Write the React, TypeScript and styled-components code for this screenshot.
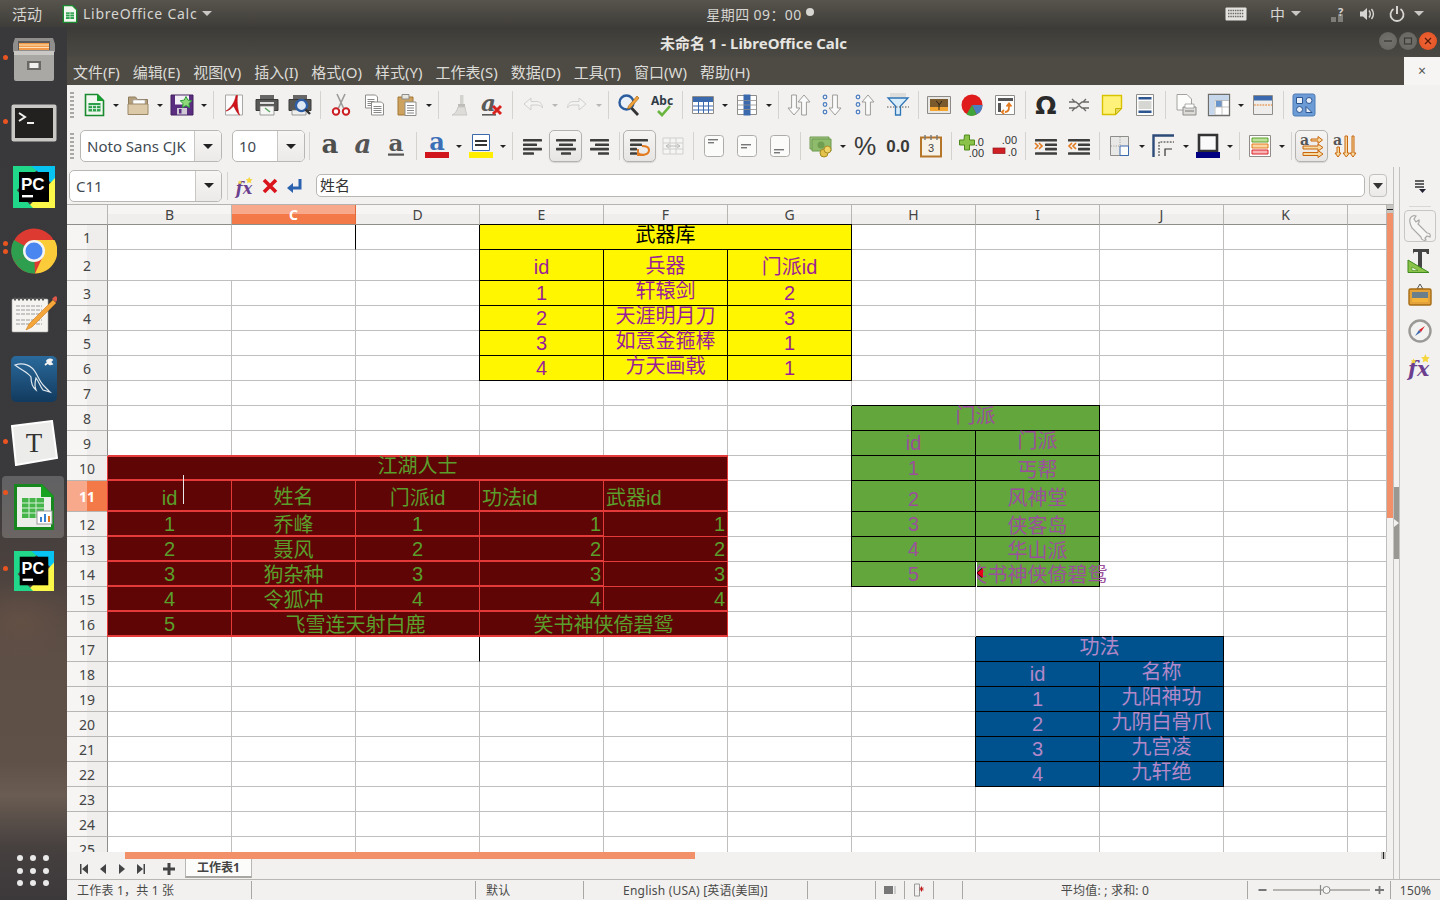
import React, { ReactNode } from 'react';
import styled, { createGlobalStyle } from 'styled-components';

const UI = `"Noto Sans", "Noto Sans CJK SC", sans-serif`;
const SHEET = `"Liberation Sans", "Noto Sans CJK SC", sans-serif`;

const Global = createGlobalStyle`
	html, body { margin: 0; padding: 0; height: 100%; overflow: hidden; background: #3a3a3c; }
	* { box-sizing: border-box; }
`;

const Page = styled.div`
	width: 1440px;
	height: 900px;
	display: flex;
	flex-direction: column;
	font-family: ${UI};
	overflow: hidden;
`;

/* ---------- gnome top bar ---------- */
const TopBar = styled.div`
	height: 27px;
	flex: none;
	display: grid;
	grid-template-columns: 1fr auto 1fr;
	align-items: center;
	padding: 0 12px;
	color: #d6d5d1;
	font-size: 14px;
	background: linear-gradient(#57544d, #3f3d39);
`;
const TopLeft = styled.div`
	display: flex;
	align-items: center;
`;
const AppName = styled.span`
	margin-left: 5px;
	letter-spacing: 0.75px;
`;
const Activities = styled.span`
	margin-right: 20px;
	font-size: 15px;
`;
const Clock = styled.div`
	display: flex;
	align-items: center;
	gap: 4px;
	margin-left: 80px;
	letter-spacing: 0.4px;
`;
const ClockDot = styled.i`
	width: 8px;
	height: 8px;
	border-radius: 50%;
	background: #d6d5d1;
	margin-top: -3px;
`;
const TopRight = styled.div`
	display: flex;
	align-items: center;
	justify-content: flex-end;
	padding-right: 4px;
`;
const TrayItem = styled.div<{ $m: number }>`
	margin-left: ${(p) => p.$m}px;
	display: flex;
	align-items: center;
	font-size: 15px;
`;
const Caret = styled.i<{ $m?: number }>`
	width: 0;
	height: 0;
	border-left: 5px solid transparent;
	border-right: 5px solid transparent;
	border-top: 5px solid #c9c8c4;
	margin-left: ${(p) => p.$m ?? 0}px;
`;

/* ---------- desktop ---------- */
const Desktop = styled.div`
	flex: 1;
	display: flex;
	min-height: 0;
`;
const Dock = styled.div`
	width: 67px;
	flex: none;
	display: flex;
	flex-direction: column;
	background:
		radial-gradient(60px 40px at 30% 68%, rgba(110, 85, 70, 0.55), transparent),
		linear-gradient(#39393b 0%, #3a3a3c 52%, #4c423e 62%, #5d4e46 72%, #5f5048 84%, #6a5c52 88%, #46403f 94%, #3c393b 100%);
`;
const DockItem = styled.div<{ $active?: boolean }>`
	position: relative;
	height: 64px;
	display: flex;
	align-items: center;
	justify-content: center;
	&::before {
		content: '';
		position: absolute;
		left: 2px;
		right: 3px;
		top: 1px;
		bottom: 1px;
		border-radius: 4px;
		background: ${(p) => (p.$active ? 'rgba(255,255,255,0.2)' : 'transparent')};
	}
	svg {
		position: relative;
	}
`;
const RunDot = styled.i<{ $top: number }>`
	position: absolute;
	left: 3px;
	top: ${(p) => p.$top}px;
	width: 5px;
	height: 5px;
	border-radius: 50%;
	background: #e95420;
`;
const AppsGrid = styled.div`
	margin-top: auto;
	padding: 0 0 14px 17px;
	display: grid;
	grid-template-columns: repeat(3, 6px);
	gap: 6.5px 7px;
	i {
		width: 6px;
		height: 6px;
		border-radius: 50%;
		background: #e9e9e9;
	}
`;

/* ---------- window ---------- */
const Window = styled.div`
	flex: 1;
	min-width: 0;
	display: flex;
	flex-direction: column;
	background: #f2f1f0;
`;
const TitleBar = styled.div`
	height: 30px;
	flex: none;
	position: relative;
	display: flex;
	align-items: center;
	justify-content: center;
	color: #e6e5e1;
	font-size: 15px;
	font-weight: 700;
	background: linear-gradient(#3d3b37, #4b4943);
`;
const WinButtons = styled.div`
	position: absolute;
	right: 3px;
	top: 5px;
	display: flex;
	gap: 2px;
`;
const WinButton = styled.div<{ $close?: boolean }>`
	width: 18px;
	height: 18px;
	border-radius: 50%;
	display: flex;
	align-items: center;
	justify-content: center;
	background: ${(p) => (p.$close ? 'radial-gradient(#f0663a, #e2501f)' : 'radial-gradient(#74736e, #64635e)')};
`;
const MenuBar = styled.div`
	height: 28px;
	flex: none;
	display: flex;
	align-items: center;
	padding-left: 6px;
	gap: 13px;
	color: #dcdbd7;
	font-size: 15px;
	background: #4e4b44;
`;
const MenuClose = styled.div`
	margin-left: auto;
	margin-top: -2px;
	width: 36px;
	height: 30px;
	background: #f6f5f4;
	color: #555;
	font-size: 14px;
	display: flex;
	align-items: center;
	justify-content: center;
`;
const Toolbar = styled.div<{ $h: number }>`
	height: ${(p) => p.$h}px;
	flex: none;
	display: flex;
	align-items: center;
	padding-left: 3px;
	background: #f2f1f0;
`;
const Grip = styled.i`
	width: 4px;
	height: 26px;
	margin-right: 3px;
	flex: none;
	background: repeating-linear-gradient(#aaa8a4 0 2px, transparent 2px 4px);
`;
const ToolBtn = styled.div<{ $pressed?: boolean }>`
	width: 33px;
	height: 32px;
	flex: none;
	display: flex;
	align-items: center;
	justify-content: center;
	${(p) =>
		p.$pressed &&
		`border: 1px solid #b4b2ae; border-radius: 5px; background: linear-gradient(#f6f5f4, #e6e5e3); box-shadow: 0 1px 1px rgba(0,0,0,.12);`}
`;
const DropArrow = styled.i<{ $off?: boolean }>`
	width: 11px;
	flex: none;
	display: flex;
	justify-content: center;
	&::after {
		content: '';
		border-left: 3px solid transparent;
		border-right: 3px solid transparent;
		border-top: 3px solid ${(p) => (p.$off ? '#b8b7b4' : '#222')};
	}
`;
const Sep = styled.i`
	width: 8px;
	height: 28px;
	flex: none;
	display: flex;
	justify-content: center;
	&::after {
		content: '';
		width: 1px;
		background: #d5d3cf;
	}
`;
const FormulaSep = styled(Sep)`
	width: 10px;
`;
const Combo = styled.div<{ $w: number; $btn: number; $m?: number }>`
	width: ${(p) => p.$w}px;
	height: 32px;
	flex: none;
	display: flex;
	margin-left: ${(p) => p.$m ?? 0}px;
	background: #fff;
	border: 1px solid #b9b7b3;
	border-radius: 5px;
	overflow: hidden;
	color: #3f4a52;
	font-size: 15px;
	span {
		flex: 1;
		padding-left: 6px;
		line-height: 30px;
		white-space: nowrap;
		overflow: hidden;
	}
	b {
		width: ${(p) => p.$btn}px;
		flex: none;
		display: flex;
		align-items: center;
		justify-content: center;
		border-left: 1px solid #c9c7c3;
		background: linear-gradient(#f7f6f5, #eceae8);
	}
	b::after {
		content: '';
		border-left: 5px solid transparent;
		border-right: 5px solid transparent;
		border-top: 5px solid #222;
	}
`;

/* ---------- middle ---------- */
const Middle = styled.div`
	flex: 1;
	min-height: 0;
	display: flex;
`;
const Workspace = styled.div`
	width: 1326px;
	flex: none;
	display: flex;
	flex-direction: column;
`;
const FormulaBar = styled.div`
	height: 38px;
	flex: none;
	display: flex;
	align-items: center;
	padding: 0 6px 0 2px;
	border-bottom: 1px solid #b5b3af;
`;
const FxBtn = styled.div`
	width: 25px;
	flex: none;
	display: flex;
	justify-content: center;
`;
const FormulaInput = styled.div`
	flex: 1;
	height: 23px;
	margin-left: 9px;
	padding-left: 3px;
	background: #fff;
	border: 1px solid #b9b7b3;
	border-radius: 5px;
	color: #333;
	font-size: 15px;
	line-height: 20px;
`;
const FormulaDrop = styled.div`
	width: 18px;
	height: 23px;
	margin-left: 4px;
	flex: none;
	border: 1px solid #c2c0bc;
	border-radius: 4px;
	display: flex;
	align-items: center;
	justify-content: center;
	background: linear-gradient(#f7f6f5, #eceae8);
	&::after {
		content: '';
		border-left: 5px solid transparent;
		border-right: 5px solid transparent;
		border-top: 6px solid #333;
	}
`;
const SheetRow = styled.div`
	flex: 1;
	min-height: 0;
	display: flex;
`;
const Sheet = styled.div`
	width: 1320px;
	height: 647px;
	flex: none;
	overflow: hidden;
	display: grid;
	grid-template-columns: 41px repeat(10, 124px) 39px;
	grid-template-rows: 20px 25px 31px repeat(8, 25px) 31px repeat(14, 25px);
	background: #fff;
	font-family: ${SHEET};
`;
const Corner = styled.div`
	grid-column: 1;
	grid-row: 1;
	background: #f2f1f0;
	border-right: 1px solid #b8b6b2;
	border-bottom: 1px solid #8f8d89;
`;
const ColHead = styled.div<{ $col: number; $on?: boolean }>`
	grid-column: ${(p) => p.$col};
	grid-row: 1;
	display: flex;
	align-items: center;
	justify-content: center;
	font-family: ${UI};
	font-size: 14px;
	font-weight: ${(p) => (p.$on ? 700 : 400)};
	color: ${(p) => (p.$on ? '#fff' : '#444')};
	background: ${(p) =>
		p.$on
			? 'linear-gradient(#f8a98c 0 45%, #f37a48 45%)'
			: 'linear-gradient(#f6f5f4 0 45%, #efeeec 45%)'};
	border-right: 1px solid ${(p) => (p.$on ? '#e2693a' : '#b8b6b2')};
	border-bottom: 1px solid #8f8d89;
`;
const RowHead = styled.div<{ $row: number; $on?: boolean }>`
	grid-column: 1;
	grid-row: ${(p) => p.$row};
	display: flex;
	align-items: center;
	justify-content: center;
	font-family: ${UI};
	font-size: 14px;
	font-weight: ${(p) => (p.$on ? 700 : 400)};
	color: ${(p) => (p.$on ? '#fff' : '#444')};
	background: ${(p) =>
		p.$on
			? 'linear-gradient(90deg, #f8a98c 0 20px, #f37a48 20px)'
			: 'linear-gradient(90deg, #f6f5f4 0 20px, #efeeec 20px)'};
	border-right: 1px solid #8f8d89;
	border-bottom: 1px solid #b8b6b2;
`;

type Tone = 'plain' | 'yellow' | 'green' | 'blue' | 'red';
const tones: Record<Tone, { bg: string; ink: string; line: string }> = {
	plain: { bg: '#fff', ink: '#000', line: '#c0bfbd' },
	yellow: { bg: '#fff600', ink: '#9a1e96', line: '#000' },
	green: { bg: '#62a63c', ink: '#9b509b', line: '#000' },
	blue: { bg: '#00528f', ink: '#b388c8', line: '#000' },
	red: { bg: '#5f0505', ink: '#5a9e2c', line: '#e53a3a' },
};

const Cell = styled.div<{
	$col: number;
	$row: number;
	$span: number;
	$tone: Tone;
	$lift: number;
	$align: string;
	$left?: boolean;
	$top?: boolean;
	$thin?: boolean;
	$ink?: string;
	$edge?: boolean;
}>`
	position: relative;
	grid-column: ${(p) => p.$col} / span ${(p) => p.$span};
	grid-row: ${(p) => p.$row};
	display: flex;
	align-items: flex-end;
	justify-content: ${(p) => p.$align};
	padding: 0 2px ${(p) => p.$lift + 2 - (p.$tone === 'red' && !p.$thin ? 1 : 0)}px;
	font-size: 20px;
	line-height: 20px;
	white-space: nowrap;
	color: ${(p) => p.$ink ?? tones[p.$tone].ink};
	background: ${(p) => tones[p.$tone].bg};
	border-right: 1px solid ${(p) => (p.$edge ? '#000' : tones[p.$tone].line)};
	border-bottom: ${(p) => (p.$tone === 'red' && !p.$thin ? 2 : 1)}px solid ${(p) => tones[p.$tone].line};
	box-shadow: ${(p) => {
		const c = tones[p.$tone].line;
		const list: string[] = [];
		if (p.$left) list.push(`-1px 0 0 ${c}`);
		if (p.$top) list.push(`0 -1px 0 ${c}`);
		if (p.$top && p.$tone === 'red') list.push(`inset 0 1px 0 ${c}`);
		return list.length ? list.join(', ') : 'none';
	}};
`;
const OverflowCell = styled(Cell)`
	z-index: 1;
	overflow: visible;
	clip-path: inset(0 -40px -1px 1px);
	background: linear-gradient(90deg, #62a63c 123px, transparent 123px);
	border-right-color: #000;
`;
const OverflowMark = styled.i`
	position: absolute;
	left: 1px;
	top: 6px;
	width: 0;
	height: 0;
	border-top: 5px solid transparent;
	border-bottom: 5px solid transparent;
	border-right: 6px solid #e8001c;
	filter: drop-shadow(-1px 0 0 #000);
`;
const EditCaret = styled.i`
	position: absolute;
	left: 75px;
	top: -6px;
	width: 1px;
	height: 29px;
	background: #e8e8e8;
`;
const VScroll = styled.div`
	width: 6px;
	flex: none;
	display: flex;
	flex-direction: column;
	background: #f2f1f0;
`;
const VScrollCap = styled.div`
	height: 8px;
	flex: none;
	background: #c9c7c3;
	display: flex;
	align-items: center;
	&::after {
		content: '';
		width: 100%;
		height: 1px;
		background: #222;
	}
`;
const VScrollThumb = styled.div`
	height: 305px;
	flex: none;
	background: #f29069;
`;
const DeckHandle = styled.div`
	width: 7px;
	flex: none;
	display: flex;
	align-items: center;
	border-left: 1px solid #c4c2be;
	border-right: 1px solid #c4c2be;
`;
const DeckThumb = styled.div`
	position: relative;
	width: 100%;
	height: 72px;
	background: #9a9892;
	&::after {
		content: '';
		position: absolute;
		left: 0;
		top: 32px;
		border-top: 4px solid transparent;
		border-bottom: 4px solid transparent;
		border-left: 5px solid #f2f1f0;
	}
`;
const Deck = styled.div`
	width: 40px;
	flex: none;
	display: flex;
	flex-direction: column;
	align-items: center;
`;
const DeckMenu = styled.div`
	height: 40px;
	width: 100%;
	flex: none;
	padding-top: 13px;
	display: flex;
	justify-content: center;
	position: relative;
	&::after {
		content: '';
		position: absolute;
		left: 9px;
		right: 9px;
		bottom: 0;
		height: 1px;
		background: #d9d7d3;
	}
`;
const DeckBtn = styled.div<{ $on?: boolean }>`
	width: 32px;
	height: 32px;
	margin-top: 3px;
	flex: none;
	display: flex;
	align-items: center;
	justify-content: center;
	border: 1px solid ${(p) => (p.$on ? '#c8c6c2' : 'transparent')};
	border-radius: 4px;
`;
const SheetBottom = styled.div`
	height: 27px;
	flex: none;
	display: flex;
	flex-direction: column;
`;
const HScroll = styled.div`
	height: 7px;
	flex: none;
	display: flex;
	padding: 0 7px 0 58px;
`;
const HThumb = styled.div`
	width: 570px;
	background: #f29069;
`;
const HCap = styled.div`
	margin-left: auto;
	width: 5px;
	background: #c9c7c3;
	display: flex;
	justify-content: center;
	&::after {
		content: '';
		width: 1px;
		background: #222;
	}
`;
const TabRow = styled.div`
	flex: 1;
	display: flex;
	align-items: flex-start;
	padding-left: 7px;
`;
const TabNav = styled.div<{ $m?: number }>`
	width: 19px;
	height: 19px;
	flex: none;
	margin-left: ${(p) => p.$m ?? 0}px;
	display: flex;
	align-items: center;
	justify-content: center;
`;
const SheetTab = styled.div`
	width: 67px;
	height: 19px;
	margin-left: 7px;
	background: #fcfcfb;
	border: 1px solid #b9b7b3;
	border-top: none;
	border-bottom: 2px solid #a9a7a3;
	color: #444;
	font-size: 12px;
	font-weight: 700;
	text-align: center;
	line-height: 17px;
`;
const StatusBar = styled.div`
	height: 21px;
	flex: none;
	display: flex;
	align-items: center;
	border-top: 1px solid #b9b7b3;
	background: #f2f1f0;
	color: #4a4a48;
	font-size: 12px;
`;
const StatusCell = styled.div<{ $w: number; $center?: boolean }>`
	width: ${(p) => p.$w}px;
	height: 18px;
	flex: none;
	display: flex;
	align-items: center;
	justify-content: ${(p) => (p.$center ? 'center' : 'flex-start')};
	padding-left: ${(p) => (p.$center ? 0 : 10)}px;
	border-right: 1px solid #a9a7a3;
	white-space: nowrap;
	letter-spacing: 0.2px;
`;
const StatusEnd = styled(StatusCell)`
	border-right: none;
`;

/* ---------- toolbar drawings ---------- */
const Glyph = styled.svg`
	display: block;
	flex: none;
	overflow: visible;
`;
const Ic: React.FC<{ children: ReactNode }> = ({ children }) => (
	<Glyph width={24} height={24} viewBox="0 0 24 24" xmlns="http://www.w3.org/2000/svg">
		{children}
	</Glyph>
);

const serif = '"DejaVu Serif", "Liberation Serif", serif';
const arial = '"Liberation Sans", sans-serif';
const lines = (ys: number[], x: number, w: number, c = '#888', h = 1) =>
	ys.map((y) => <rect key={y} x={x} y={y} width={w} height={h} fill={c} />);
const Bars: React.FC<{ rows: [number, number][] }> = ({ rows }) => (
	<>
		{rows.map(([x, w], i) => (
			<rect key={i} x={x} y={5 + i * 4.4} width={w} height={2.6} rx="0.6" fill="#3e3e3c" />
		))}
	</>
);
const Arrow: React.FC<{ x: number; up?: boolean; c?: string }> = ({ x, up, c = '#9d9c98' }) => (
	<path
		d={up ? `M${x} 2l6 7h-3.6v13h-4.8V9H${x - 6}z` : `M${x} 22l6-7h-3.6V2h-4.8v13H${x - 6}z`}
		fill="#fafafa"
		stroke={c}
	/>
);
const Dots = () => (
	<g fill="none" stroke="#4a7cc0" strokeWidth="1.2">
		<circle cx="5" cy="4" r="1.8" />
		<circle cx="5" cy="11.5" r="1.8" />
		<circle cx="5" cy="19" r="1.8" />
	</g>
);
function VBox({ y }: { y: number }) {
	return (
		<Ic>
			<rect x="2.5" y="1.5" width="19" height="21" rx="3" fill="#fbfbfa" stroke="#aeaca8" />
			<rect x="6" y={y} width="10" height="1.4" fill="#777" />
			<rect x="6" y={y + 3} width="6" height="1.4" fill="#777" />
		</Ic>
	);
}

const icons: Record<string, ReactNode> = {
	new: (
		<Ic>
			<path d="M3.5 1.5h12l6 6v15h-18z" fill="#f2f7ef" stroke="#1b8a2e" strokeWidth="1.6" />
			<path d="M15 1l7 7h-7z" fill="#18a030" />
			<path d="M6.5 10h12v8.5h-12z" fill="#2ba04a" />
			<path d="M6.5 12.6h12M6.5 15.6h12M10.5 12v6.5M14.5 12v6.5" stroke="#e5f4e8" strokeWidth=".9" />
		</Ic>
	),
	open: (
		<Ic>
			<path d="M2.5 4h7l2 2.5h10v14h-19z" fill="#b49f7c" stroke="#8f7c5c" />
			<path d="M7 7h12v6H7z" fill="#fff" stroke="#a9a9a9" strokeWidth=".6" />
			<path d="M2 11h20v10.5H2z" fill="#dcc9a8" stroke="#9a8766" />
		</Ic>
	),
	save: (
		<Ic>
			<path d="M1 2h22v20H1z" fill="#5b2d80" stroke="#43205f" />
			<path d="M5 2.5h14v9H5z" fill="#f4f1f6" />
			<path d="M7 15h10v6.5H7z" fill="#cfc9d6" />
			<path d="M9 16h2.5v4.5H9z" fill="#5b2d80" />
			<path d="M16 3.5l1.8 3.6 4 .6-2.9 2.8.7 4-3.6-1.9-3.6 1.9.7-4L10.2 7.7l4-.6z" fill="#8fd87a" stroke="#2f9f3c" />
		</Ic>
	),
	pdf: (
		<Ic>
			<path d="M3.500 2h17v20h-17z" fill="#fbfbfb" stroke="#a9a8a5" />
			<path d="M14 2.500C13 9 9 15 4 18c3-.3 5.500-3 7.500-5 1.500 2 4 8 6 9-1.500-4-3-12-2-19.500z" fill="#d2131a" stroke="#b00c12" strokeWidth=".6" />
		</Ic>
	),
	print: (
		<Ic>
			<path d="M5 2h14v6H5z" fill="#666" />
			<path d="M1 6.500h22v11H1z" fill="#585856" stroke="#3a3a38" />
			<path d="M5 9h14v2H5z" fill="#ddd" />
			<path d="M5 13h14v9H5z" fill="#f6f6f4" stroke="#777" strokeWidth=".7" />
			<path d="M10 15l5 4" stroke="#5fa868" strokeWidth="1.6" />
		</Ic>
	),
	preview: (
		<Ic>
			<path d="M5 2h14v6H5z" fill="#666" />
			<path d="M1 6.500h22v11H1z" fill="#565654" stroke="#3a3a38" />
			<path d="M4 17h14v5H4z" fill="#efefed" stroke="#777" strokeWidth=".7" />
			<circle cx="13.500" cy="12.500" r="5.6" fill="#dfe9f6" stroke="#2d5ea6" strokeWidth="2.4" />
			<path d="M17.500 16.500l4.500 4.500" stroke="#333" strokeWidth="2.4" />
		</Ic>
	),
	cut: (
		<Ic>
			<path d="M8 1l6.500 14M16 1L9.500 15" stroke="#9b9a97" strokeWidth="1.6" fill="none" />
			<circle cx="7" cy="18.500" r="3.2" fill="#fff" stroke="#cc1f24" strokeWidth="2" />
			<circle cx="17" cy="18.500" r="3.2" fill="#fff" stroke="#cc1f24" strokeWidth="2" />
		</Ic>
	),
	copy: (
		<Ic>
			<path d="M3.500 2h10l2 2v11h-12z" fill="#fff" stroke="#8e8d8a" />
			{lines([6, 8, 10, 12], 5.5, 7)}
			<path d="M9.500 9h10l2 2v11h-12z" fill="#fff" stroke="#8e8d8a" />
			{lines([13, 15, 17, 19], 11.5, 8)}
		</Ic>
	),
	paste: (
		<Ic>
			<path d="M3 4h15v18H3z" fill="#cda15e" stroke="#a37632" />
			<path d="M7 1.500h7V6H7z" fill="#e8e6e0" stroke="#8e8d8a" />
			<path d="M10 9h11v13.500H10z" fill="#fff" stroke="#8e8d8a" />
			{lines([12, 14.5, 17, 19.5], 12, 7)}
		</Ic>
	),
	clone: (
		<Ic>
			<path d="M13 2h3.500v9H13z" fill="#d3d2cf" />
			<path d="M11 11h7v3h-7z" fill="#bdbcb9" />
			<path d="M11 14h7c.5 3 1 6 2 8H5c3-1 5-4 6-8z" fill="#dddcd9" stroke="#c9c8c5" />
		</Ic>
	),
	clear: (
		<Ic>
			<text x="1" y="18" fontFamily={serif} fontStyle="italic" fontWeight="700" fontSize="23" fill="#5b5b5a">a</text>
			<rect x="2" y="21" width="14" height="1.6" fill="#5b5b5a" />
			<path d="M13 13l8 8M21 13l-8 8" stroke="#d9231f" strokeWidth="3" />
		</Ic>
	),
	undo: (
		<Ic>
			<path d="M3 11l7-6v3.600h6c3.500 0 5.500 2.800 5.500 6.400-1-2.200-3-3-5.500-3h-6V17z" fill="#f4f4f2" stroke="#d0cfcc" />
		</Ic>
	),
	redo: (
		<Ic>
			<path d="M21 11l-7-6v3.600H8C4.500 8.600 2.500 11.400 2.500 15c1-2.200 3-3 5.500-3h6V17z" fill="#f4f4f2" stroke="#d0cfcc" />
		</Ic>
	),
	find: (
		<Ic>
			<circle cx="9.500" cy="9.500" r="7" fill="#e9f0f8" stroke="#2b5c9e" strokeWidth="2.4" />
			<path d="M14.500 15l6.500 7" stroke="#333" strokeWidth="2.8" />
			<path d="M20 3l2 2-8.500 10-3 1 1-3z" fill="#f2a33a" stroke="#a96512" strokeWidth=".7" />
		</Ic>
	),
	spell: (
		<Ic>
			<text x="1" y="12" fontFamily={UI} fontWeight="700" fontSize="12" fill="#2f3b46">Abc</text>
			<path d="M8 18l4 4 8-9" fill="none" stroke="#6ab53f" strokeWidth="2.6" />
		</Ic>
	),
	table: (
		<Ic>
			<path d="M1.500 3.500h21v17h-21z" fill="#fff" stroke="#8e8d8a" />
			<path d="M2 4h20v5H2z" fill="#3a69ad" />
			<path d="M2 13h20M2 17h20M7.500 4v16M12.500 4v16M17.500 4v16" stroke="#3a69ad" strokeWidth="1" />
		</Ic>
	),
	cols: (
		<Ic>
			<path d="M2.500 2.500h19v19h-19z" fill="#fff" stroke="#8e8d8a" />
			<path d="M8.500 1.500h7v21h-7z" fill="#3a69ad" />
			<path d="M2.500 7.500h19M2.500 12h19M2.500 16.500h19" stroke="#8e8d8a" strokeWidth=".8" />
		</Ic>
	),
	sort: (
		<Ic>
			<Arrow x={7} />
			<Arrow x={17} up />
		</Ic>
	),
	asc: (
		<Ic>
			<Dots />
			<Arrow x={15} />
		</Ic>
	),
	desc: (
		<Ic>
			<Dots />
			<Arrow x={15} up />
		</Ic>
	),
	filter: (
		<Ic>
			<path d="M4 0h16v5H4z" fill="#d5d5d3" opacity=".7" />
			<path d="M2 5h20l-7.500 8v9h-5v-9z" fill="#d8ecf9" stroke="#2f75b5" strokeWidth="1.3" />
			<path d="M1 14h22" stroke="#555" strokeDasharray="1.5 1.5" />
		</Ic>
	),
	image: (
		<Ic>
			<path d="M.5 3.500h23v17H.5z" fill="#e8e7e4" stroke="#8c8b88" strokeWidth="1" />
			<path d="M3 6h18v12H3z" fill="#7a5a2c" />
			<path d="M3 14h18v4H3z" fill="#f3a732" />
			<path d="M12 17v-6l-3-3M12 12l3-4" stroke="#2c2416" strokeWidth="1" fill="none" />
		</Ic>
	),
	chart: (
		<Ic>
			<circle cx="12" cy="12" r="10.500" fill="#e01b1b" />
			<path d="M12 12l10.500 0a10.500 10.500 0 0 1-6 9.500z" fill="#4d7fc0" />
			<path d="M12 12l4.500 9.500a10.500 10.500 0 0 1-10 .1z" fill="#3fa53a" />
		</Ic>
	),
	pivot: (
		<Ic>
			<path d="M2.500 2.500h19v19h-19z" fill="#fdfdfd" stroke="#8e8d8a" />
			<path d="M5 5h15v3H5zM5 10h3v9H5z" fill="#555" />
			<path d="M12 19c3 0 4-2 4-5v-2m-2.500 1.500L16 10.500l2.500 3M11 17l-2 2 2 2" fill="none" stroke="#e37a1f" strokeWidth="1.8" />
		</Ic>
	),
	omega: (
		<Ic>
			<text x="12" y="21" textAnchor="middle" fontFamily='"DejaVu Sans", sans-serif' fontWeight="700" fontSize="25" fill="#2a2a2a">Ω</text>
		</Ic>
	),
	link: (
		<Ic>
			<path d="M2 9h7l3 2.500L15 9h7M2 15h7l3-2.500L15 15h7M5 6l3 3M19 6l-3 3M5 18l3-3M19 18l-3-3" stroke="#6a6966" strokeWidth="1.4" fill="none" />
		</Ic>
	),
	note: (
		<Ic>
			<path d="M2.500 2.500h19v13l-6 6h-13z" fill="#fff27a" stroke="#d9c200" strokeWidth="1.4" />
			<path d="M15.500 21.500v-6h6z" fill="#e6d65a" stroke="#c9b400" />
		</Ic>
	),
	header: (
		<Ic>
			<path d="M3.500 1.500h17v21h-17z" fill="#fcfcfb" stroke="#8e8d8a" />
			<path d="M5.500 4h13v2.500h-13zM5.500 17.500h13V20h-13z" fill="#2d5590" />
			{lines([8.5, 10.5, 12.5, 14.5], 5.5, 13, '#b0afac')}
		</Ic>
	),
	area: (
		<Ic>
			<path d="M3 1.500h10l4.500 4.500v11H3z" fill="#fcfcfb" stroke="#a3a29f" />
			<path d="M9 14h13v8H9z" fill="#dcdbd8" stroke="#8e8d8a" />
			<path d="M11 11h9v4h-9z" fill="#fff" stroke="#8e8d8a" strokeWidth=".7" />
			<path d="M11 18h9" stroke="#777" />
		</Ic>
	),
	freeze: (
		<Ic>
			<path d="M1.500 1.500h21v21h-21z" fill="#fff" stroke="#6f6e6b" strokeWidth="1.3" />
			<path d="M2 2h20v5.500H2zM2 7.500h5.500V22H2z" fill="#c6d7ec" />
			<path d="M9 7.500h6V14H9z" fill="#6a96cc" />
			<path d="M8 7.500V22M15 7.500V22M8 14h14M8 7.500h14" stroke="#b5b4b1" strokeWidth=".8" />
		</Ic>
	),
	split: (
		<Ic>
			<path d="M2.500 2.500h19v19h-19z" fill="#eeedeb" stroke="#8e8d8a" />
			<path d="M3 3h18v4.500H3z" fill="#3a69ad" />
			<path d="M3 12h18" stroke="#e37a1f" strokeDasharray="1.8 1" />
		</Ic>
	),
	nav: (
		<Ic>
			<path d="M3 1h18a2 2 0 0 1 2 2v18a2 2 0 0 1-2 2H3a2 2 0 0 1-2-2V3a2 2 0 0 1 2-2z" fill="#6c9bd6" stroke="#4d7cb8" />
			<path d="M4.500 4.500h6v6h-6z" fill="#e8eff8" stroke="#2d5590" />
			<circle cx="17" cy="7.500" r="3" fill="#e8eff8" stroke="#2d5590" />
			<circle cx="7.500" cy="16.500" r="3" fill="#e8eff8" stroke="#2d5590" />
			<path d="M14 19.500l0-6 6 6z" fill="#e8eff8" stroke="#2d5590" />
		</Ic>
	),
	bold: (
		<Ic>
			<text x="12" y="19" textAnchor="middle" fontFamily={serif} fontWeight="700" fontSize="26" fill="#4d4d4b">a</text>
		</Ic>
	),
	italic: (
		<Ic>
			<text x="12" y="19" textAnchor="middle" fontFamily={serif} fontStyle="italic" fontWeight="700" fontSize="26" fill="#555">a</text>
		</Ic>
	),
	underline: (
		<Ic>
			<text x="12" y="17" textAnchor="middle" fontFamily={serif} fontWeight="700" fontSize="23" fill="#555">a</text>
			<rect x="4" y="19.500" width="16" height="2.2" fill="#555" />
		</Ic>
	),
	fontColor: (
		<Ic>
			<text x="12" y="16" textAnchor="middle" fontFamily={serif} fontWeight="700" fontSize="24" fill="#3a6fb8">a</text>
			<rect x="0" y="18" width="24" height="6" fill="#d0151c" />
		</Ic>
	),
	bgColor: (
		<Ic>
			<path d="M3.500 .5h17v16h-17z" fill="#fff" stroke="#3a69ad" />
			<path d="M6 6h12v2H6zM6 10h12v2H6z" fill="#333" />
			<rect x="0" y="18" width="24" height="6" fill="#ffee00" />
		</Ic>
	),
	left: (
		<Ic>
			<Bars rows={[[2, 19], [2, 14], [2, 19], [2, 11]]} />
		</Ic>
	),
	center: (
		<Ic>
			<Bars rows={[[2, 20], [5, 14], [2, 20], [7, 10]]} />
		</Ic>
	),
	right: (
		<Ic>
			<Bars rows={[[3, 19], [8, 14], [3, 19], [11, 11]]} />
		</Ic>
	),
	wrap: (
		<Ic>
			<Bars rows={[[2, 18], [2, 12], [2, 7], [2, 7]]} />
			<path d="M10 19c4 3 11 2 11-3 0-4-4-4-7-4" fill="none" stroke="#e37a1f" strokeWidth="2" />
			<path d="M10 15v6h6" fill="none" stroke="#e37a1f" strokeWidth="1.8" />
		</Ic>
	),
	merge: (
		<Ic>
			<path d="M2 4h20v16H2z" fill="#f5f5f3" stroke="#d0cfcc" />
			<path d="M2 9h20M2 15h20M9 4v16M15 4v16" stroke="#d0cfcc" />
			<path d="M5 12h14M5 12l3-2M5 12l3 2M19 12l-3-2M19 12l-3 2" stroke="#bdbcb9" />
		</Ic>
	),
	vtop: <VBox y={5} />,
	vcenter: <VBox y={10} />,
	vbottom: <VBox y={15} />,
	money: (
		<Ic>
			<path d="M1 3h19v12H1z" fill="#a6c88a" stroke="#6d9a4d" />
			<path d="M3 5h19v12H3z" fill="#8fbc6c" stroke="#6d9a4d" />
			<circle cx="12" cy="11" r="3.500" fill="#6f9e50" />
			<circle cx="15" cy="19" r="4" fill="#e4c34d" stroke="#a38a22" />
			<circle cx="18.500" cy="15.500" r="3.500" fill="#f0d468" stroke="#a38a22" />
		</Ic>
	),
	percent: (
		<Ic>
			<text x="12" y="21" textAnchor="middle" fontFamily={arial} fontSize="25" fill="#3a3a38">%</text>
		</Ic>
	),
	number: (
		<Ic>
			<text x="12" y="18" textAnchor="middle" fontFamily={arial} fontWeight="700" fontSize="17" fill="#3a3a38">0.0</text>
		</Ic>
	),
	date: (
		<Ic>
			<path d="M2 3.500h20v19H2z" fill="#f6f2e8" stroke="#b5762a" strokeWidth="2" />
			<path d="M6 1v5M12 1v5M18 1v5" stroke="#777" strokeWidth="1.4" />
			<text x="12" y="18" textAnchor="middle" fontFamily={arial} fontSize="11" fill="#444">3</text>
		</Ic>
	),
	addDec: (
		<Ic>
			<path d="M4.500 1h5v5h5v5h-5v5h-5v-5h-5V6h4.500z" fill="#8bc34a" stroke="#4f8a1d" />
			<text x="24" y="12" textAnchor="end" fontFamily={arial} fontSize="11" fill="#333">.0</text>
			<text x="24" y="23" textAnchor="end" fontFamily={arial} fontSize="11" fill="#333">.00</text>
		</Ic>
	),
	remDec: (
		<Ic>
			<text x="24" y="10" textAnchor="end" fontFamily={arial} fontSize="11" fill="#333">.00</text>
			<rect x="0" y="14" width="12" height="5.5" fill="#cf1f24" stroke="#93141a" strokeWidth=".7" />
			<text x="24" y="22" textAnchor="end" fontFamily={arial} fontSize="11" fill="#333">.0</text>
		</Ic>
	),
	indent: (
		<Ic>
			<Bars rows={[[1, 22], [11, 12], [11, 12], [1, 22]]} />
			<path d="M1 9l3 3-3 3M5 9l3 3-3 3" fill="none" stroke="#e37a1f" strokeWidth="1.6" />
		</Ic>
	),
	outdent: (
		<Ic>
			<Bars rows={[[1, 22], [11, 12], [11, 12], [1, 22]]} />
			<path d="M5 9l-3 3 3 3M9 9l-3 3 3 3" fill="none" stroke="#e37a1f" strokeWidth="1.6" />
		</Ic>
	),
	borders: (
		<Ic>
			<path d="M2.500 2.500h18v19h-18z" fill="#e8e8e6" stroke="#8e8d8a" />
			<path d="M12 12h8.500v9.500H12z" fill="#fcfcfb" stroke="#3a69ad" />
			<path d="M12 3v9M3 12h9" stroke="#9a9996" strokeDasharray="1 1.4" />
		</Ic>
	),
	borderStyle: (
		<Ic>
			<path d="M1.500 23V1.500H22" fill="none" stroke="#2d4a78" strokeWidth="2.4" />
			<path d="M7 22V8h15" fill="none" stroke="#222" strokeDasharray="1.8 1.3" />
			<path d="M13 22v-7h7" fill="none" stroke="#333" strokeWidth="1.2" />
		</Ic>
	),
	borderColor: (
		<Ic>
			<path d="M3 1h18v16H3z" fill="#fafafa" stroke="#333" strokeWidth="2.6" />
			<rect x="0" y="18" width="24" height="6" fill="#000080" />
		</Ic>
	),
	cond: (
		<Ic>
			<path d="M1.500 1.500h21v21h-21z" fill="#fff" stroke="#8e8d8a" />
			<path d="M4 4h16v4H4z" fill="#bfe29a" stroke="#5a9e2c" />
			<path d="M4 10h16v4H4z" fill="#fad5a5" stroke="#e37a1f" />
			<path d="M4 16h16v4H4z" fill="#f8b4b4" stroke="#d9232a" />
		</Ic>
	),
	sortLr: (
		<Ic>
			<text x="0" y="11" fontFamily={serif} fontWeight="700" fontSize="14" fill="#555">a</text>
			<path d="M11 5h7V2.500L22.500 6 18 9.500V7h-7z" fill="#f7d9a0" stroke="#c9660c" />
			<path d="M3 12h15v-2l5 3.500-5 3.500v-2H3z" fill="#f7d9a0" stroke="#c9660c" />
			<path d="M3 18.500h15v-2l5 3.500-5 3.500v-2H3z" fill="#f7d9a0" stroke="#c9660c" />
		</Ic>
	),
	sortTb: (
		<Ic>
			<text x="0" y="11" fontFamily={serif} fontWeight="700" fontSize="14" fill="#555">a</text>
			<path d="M4 13h2.500v6H8l-3 4-3-4h2z" fill="#f7d9a0" stroke="#c9660c" />
			<path d="M12 2h2.500v17h2l-3.200 4-3.300-4h2z" fill="#f7d9a0" stroke="#c9660c" />
			<path d="M19 2h2v17h2l-3 4-3-4h2z" fill="#f7d9a0" stroke="#c9660c" />
		</Ic>
	),
};

const toolbarOne =
	'new dd open dd save dd | pdf print preview | cut copy paste dd | clone clear | undo off redo off | find spell | table dd cols dd | sort asc desc filter | image chart pivot | omega link note header | area freeze dd split | nav'.split(
		' ',
	);
const toolbarTwo =
	'| bold italic underline | fontColor dd bgColor dd | left center! right | wrap! merge | vtop vcenter vbottom | money dd percent number date | addDec remDec | indent outdent | borders dd borderStyle dd borderColor dd | cond dd | sortLr! sortTb'.split(
		' ',
	);

const ToolRun: React.FC<{ items: string[] }> = ({ items }) => (
	<>
		{items.map((token, i) => {
			if (token === 'dd') return <DropArrow key={i} />;
			if (token === 'off') return <DropArrow key={i} $off />;
			if (token === '|') return <Sep key={i} />;
			const pressed = token.endsWith('!');
			return (
				<ToolBtn key={i} $pressed={pressed}>
					{icons[token.replace('!', '')]}
				</ToolBtn>
			);
		})}
	</>
);

/* ---------- sheet data ---------- */
type Spec = { tone: Tone; c: number; r: number; span?: number; t?: string; lift?: number; align?: string; ink?: string; thin?: boolean };
const starts: Partial<Record<Tone, [number, number]>> = {
	yellow: [5, 1],
	green: [8, 8],
	blue: [9, 17],
	red: [2, 10],
};

const makeRow = (
	tone: Tone,
	r: number,
	c0: number,
	cjk: number,
	items: (string | Partial<Spec>)[],
): Spec[] => {
	let c = c0;
	return items.map((item) => {
		const o: Partial<Spec> = typeof item === 'string' ? { t: item } : item;
		const hasCjk = /[\u4e00-\u9fa5]/.test(o.t ?? '');
		const spec: Spec = { tone, r, c, lift: hasCjk ? cjk : 0, ...o };
		c += o.span ?? 1;
		return spec;
	});
};

const R = 'flex-end';
const L = 'flex-start';
const specs: Spec[] = [
	...makeRow('yellow', 1, 5, 2, [{ t: '武器库', span: 3, ink: '#000' }]),
	...makeRow('yellow', 2, 5, 2, [{ t: 'id', lift: 1 }, '兵器', { t: '门派id', lift: 1 }]),
	...makeRow('yellow', 3, 5, 2, ['1', '轩辕剑', '2']),
	...makeRow('yellow', 4, 5, 2, ['2', '天涯明月刀', '3']),
	...makeRow('yellow', 5, 5, 2, ['3', '如意金箍棒', '1']),
	...makeRow('yellow', 6, 5, 2, ['4', '方天画戟', '1']),
	...makeRow('green', 8, 8, 2, [{ t: '门派', span: 2 }]),
	...makeRow('green', 9, 8, 2, ['id', '门派']),
	...makeRow('green', 10, 8, -2, ['1', '丐帮']),
	...makeRow('green', 11, 8, 1, ['2', '风神堂']),
	...makeRow('green', 12, 8, -2, ['3', '侠客岛']),
	...makeRow('green', 13, 8, -2, ['4', '华山派']),
	...makeRow('green', 14, 8, -2, ['5']),
	...makeRow('blue', 17, 9, 2, [{ t: '功法', span: 2 }]),
	...makeRow('blue', 18, 9, 2, ['id', '名称']),
	...makeRow('blue', 19, 9, 2, ['1', '九阳神功']),
	...makeRow('blue', 20, 9, 2, ['2', '九阴白骨爪']),
	...makeRow('blue', 21, 9, 2, ['3', '九宫凌']),
	...makeRow('blue', 22, 9, 2, ['4', '九轩绝']),
	...makeRow('red', 10, 2, 2, [{ t: '江湖人士', span: 5 }]),
	...makeRow('red', 11, 2, 2, [
		{ t: 'id', lift: 1 },
		'姓名',
		{ t: '门派id', lift: 1 },
		{ t: '功法id', lift: 1, align: L },
		{ t: '武器id', lift: 1, align: L },
	]),
	...makeRow('red', 12, 2, -1, ['1', '乔峰', '1', { t: '1', align: R }, { t: '1', align: R, thin: true }]),
	...makeRow('red', 13, 2, -1, ['2', '聂风', '2', { t: '2', align: R }, { t: '2', align: R, thin: true }]),
	...makeRow('red', 14, 2, -1, ['3', '狗杂种', '3', { t: '3', align: R }, { t: '3', align: R, thin: true }]),
	...makeRow('red', 15, 2, -1, ['4', '令狐冲', '4', { t: '4', align: R }, { t: '4', align: R }]),
	...makeRow('red', 16, 2, -1, ['5', { t: '飞雪连天射白鹿', span: 2 }, { t: '笑书神侠倚碧鸳', span: 2 }]),
	{ tone: 'plain', c: 2, r: 2, span: 2 },
];

const taken = new Set<string>();
specs.forEach((s) => {
	for (let i = 0; i < (s.span ?? 1); i++) taken.add(`${s.c + i},${s.r}`);
});
taken.add('9,14');

const blanks: Spec[] = [];
for (let r = 1; r <= 25; r++) {
	for (let c = 2; c <= 12; c++) {
		if (!taken.has(`${c},${r}`)) blanks.push({ tone: 'plain', c, r });
	}
}
const columnLetters = ['B', 'C', 'D', 'E', 'F', 'G', 'H', 'I', 'J', 'K', ''];
const rowNumbers = Array.from({ length: 25 }, (_, i) => i + 1);

const SheetCell: React.FC<{ s: Spec; children?: ReactNode }> = ({ s, children }) => {
	const start = starts[s.tone];
	return (
		<Cell
			$col={s.c}
			$row={s.r + 1}
			$span={s.span ?? 1}
			$tone={s.tone}
			$lift={s.lift ?? 0}
			$align={s.align ?? 'center'}
			$ink={s.ink}
			$thin={s.thin}
			$left={!!start && s.c === start[0]}
			$top={!!start && s.r === start[1]}
			$edge={(s.c === 3 && s.r === 1) || (s.c === 4 && s.r === 17)}
		>
			{s.t}
			{children}
		</Cell>
	);
};

/* ---------- dock art ---------- */
const DockCabinet = () => (
	<svg width="44" height="44" viewBox="0 0 44 44">
		<path d="M3 1h38l2 6v8H1V7z" fill="#8f8e8c" />
		<path d="M6 4h32v9H6z" fill="#5c5a58" />
		<path d="M7 6h30v7H7z" fill="#f29a4a" />
		<path d="M7 8h30M7 10.500h30" stroke="#fbe0b8" />
		<path d="M2 14h40v28a2 2 0 0 1-2 2H4a2 2 0 0 1-2-2z" fill="#a9a8a5" />
		<path d="M2 14h40v4H2z" fill="#c9c8c5" />
		<path d="M15 24h14v9H15z" fill="#6a6966" />
		<path d="M17.500 26h9v5h-9z" fill="#f0f0ee" />
	</svg>
);
const DockTerminal = () => (
	<svg width="46" height="38" viewBox="0 0 46 38">
		<rect x=".5" y=".5" width="45" height="37" rx="2" fill="#c9c8c5" />
		<rect x="4" y="4" width="38" height="30" fill="#22211f" />
		<path d="M8 9l6 4-6 4" fill="none" stroke="#f2f2f2" strokeWidth="2" />
		<path d="M16 19h7" stroke="#f2f2f2" strokeWidth="2" />
	</svg>
);
const DockPyCharm: React.FC<{ s: number }> = ({ s }) => (
	<svg width={s} height={s} viewBox="0 0 42 42">
		<path d="M0 0h28L0 28z" fill="#21d789" />
		<path d="M18 0h24v20z" fill="#07c3f2" />
		<path d="M42 12v30H14z" fill="#fcf84a" />
		<path d="M0 20l20 22H0z" fill="#21d789" />
		<rect x="6" y="6" width="30" height="30" fill="#000" />
		<text x="8" y="24" fontFamily={arial} fontWeight="700" fontSize="17" fill="#fff">PC</text>
		<rect x="9" y="29" width="11" height="2.4" fill="#fff" />
	</svg>
);
const DockChrome = () => (
	<svg width="46" height="46" viewBox="0 0 46 46">
		<circle cx="23" cy="23" r="22.500" fill="#dd3b31" />
		<path d="M23 23L3.500 34a22.500 22.500 0 0 1-.5-22z" fill="#2e9e4f" />
		<path d="M23 23l-19.500 11A22.500 22.500 0 0 0 24 45.500z" fill="#2e9e4f" />
		<path d="M23 12h20.500a22.500 22.500 0 0 1-19.500 33.500L32 28z" fill="#fbcb3a" />
		<circle cx="23" cy="23" r="11" fill="#f4f4f4" />
		<circle cx="23" cy="23" r="8.500" fill="#4a86f0" />
	</svg>
);
const DockNotes = () => (
	<svg width="46" height="38" viewBox="0 0 46 38">
		<rect x="1" y="3" width="36" height="33" rx="1" fill="#f5f4f0" stroke="#aaa" strokeWidth=".6" />
		<path d="M3 3h32" stroke="#555" strokeWidth="3" strokeDasharray="2 2" />
		{[10, 14, 18, 24, 28].map((y) => (
			<path key={y} d={`M5 ${y}h26`} stroke="#9a9a9a" strokeWidth="1.2" strokeDasharray="4 1" />
		))}
		<path d="M42 4l3 3-24 24-6 3 3-6z" fill="#f4a63a" stroke="#c97c1c" strokeWidth=".6" />
		<path d="M41 3l2-2a2 2 0 0 1 3 3l-1 2z" fill="#e0584a" />
	</svg>
);
const DockMysql = () => (
	<svg width="46" height="46" viewBox="0 0 46 46">
		<defs>
			<linearGradient id="my" x1="0" y1="0" x2="0" y2="1">
				<stop offset="0" stopColor="#2a6a9c" />
				<stop offset="1" stopColor="#123a5e" />
			</linearGradient>
		</defs>
		<rect width="46" height="46" rx="5" fill="url(#my)" />
		<path d="M4 9c6-2 12-1 17 3 5 4 6 12 12 18l6 6-7-2c-3-4-4-8-7-12-1 4-2 7 0 12-4-3-5-8-5-13C17 16 10 14 4 9z" fill="none" stroke="#dfe8ef" strokeWidth="1.2" />
		<path d="M34 9l6-5M36 5c1-2 4-2 5-1l-2 2 2 2c-2 1-4 0-5-3z" stroke="#f2f2f2" strokeWidth="1.8" fill="#f2f2f2" />
	</svg>
);
const DockText = () => (
	<svg width="48" height="46" viewBox="0 0 48 46">
		<path d="M2 6l40-5 5 37-41 7z" fill="#ececea" stroke="#fff" strokeWidth="2" />
		<text x="24" y="32" textAnchor="middle" fontFamily='"Liberation Serif", serif' fontSize="27" fontWeight="400" fill="#333">T</text>
	</svg>
);
const DockCalc = () => (
	<svg width="40" height="46" viewBox="0 0 40 46">
		<path d="M1.500 1.500h26l11 11v32h-37z" fill="#eceeea" stroke="#17861f" strokeWidth="3" />
		<path d="M27 0l13 13H27z" fill="#17a31f" />
		<path d="M8 14h22v20H8z" fill="#45b54a" />
		<path d="M8 19h22M8 24h22M8 29h22M15 14v20M22 14v20" stroke="#d8f0d8" />
		<rect x="23" y="27" width="15" height="13" fill="#fff" stroke="#999" />
		<path d="M26 38v-5h2v5zM30 38v-8h2v8z" fill="#3a7fd0" />
		<path d="M34 38v-6h2v6z" fill="#e37a1f" />
	</svg>
);

const dockApps: { node: ReactNode; dots?: number[]; active?: boolean }[] = [
	{ node: <DockCabinet />, dots: [30] },
	{ node: <DockTerminal />, dots: [30] },
	{ node: <DockPyCharm s={42} /> },
	{ node: <DockChrome />, dots: [24, 32] },
	{ node: <DockNotes /> },
	{ node: <DockMysql /> },
	{ node: <DockText />, dots: [30] },
	{ node: <DockCalc />, dots: [17], active: true },
	{ node: <DockPyCharm s={40} />, dots: [29] },
];

const menus = ['文件(F)', '编辑(E)', '视图(V)', '插入(I)', '格式(O)', '样式(Y)', '工作表(S)', '数据(D)', '工具(T)', '窗口(W)', '帮助(H)'];

const Fx: React.FC<{ s?: number }> = ({ s = 22 }) => (
	<Glyph width={s} height={s} viewBox="0 0 24 24">
		<text x="1" y="21" fontFamily={serif} fontStyle="italic" fontWeight="700" fontSize="19" fill="#6b3f8e">fx</text>
		<path d="M17 1l1.200 2.600 2.800.4-2 2 .5 2.800-2.500-1.400-2.500 1.400.5-2.800-2-2 2.800-.4z" fill="#f5d63c" />
		<path d="M6 5l.8 1.600 1.700.3-1.200 1.200.3 1.700L6 9l-1.600.8.3-1.700-1.200-1.200 1.700-.3z" fill="#f5d63c" />
	</Glyph>
);

const TabArrow: React.FC<{ d: string }> = ({ d }) => (
	<Glyph width={12} height={12} viewBox="0 0 12 12">
		<path d={d} fill="#444" />
	</Glyph>
);

const App: React.FC = () => (
	<Page>
		<Global />
		<TopBar>
			<TopLeft>
				<Activities>活动</Activities>
				<Glyph width={16} height={18} viewBox="0 0 24 27">
					<path d="M2 1h14l6 6v19H2z" fill="#f2f7ef" stroke="#1b8a2e" strokeWidth="2" />
					<path d="M6 11h12v10H6z" fill="#2ba04a" />
					<path d="M6 14h12M6 17.500h12M12 11v10" stroke="#e5f4e8" />
				</Glyph>
				<AppName>LibreOffice Calc</AppName>
				<Caret $m={5} />
			</TopLeft>
			<Clock>
				星期四 09：00
				<ClockDot />
			</Clock>
			<TopRight>
				<TrayItem $m={0}>
					<Glyph width={22} height={14} viewBox="0 0 22 14">
						<rect x=".5" y=".5" width="21" height="13" rx="1" fill="#e4e3df" />
						<path d="M3 3.500h16M3 6.500h16M3 9.500h16" stroke="#6a6965" strokeWidth="1.5" strokeDasharray="1.5 .8" />
					</Glyph>
				</TrayItem>
				<TrayItem $m={23}>中</TrayItem>
				<Caret $m={6} />
				<TrayItem $m={29}>
					<Glyph width={20} height={18} viewBox="0 0 20 18">
						<path d="M1 17h5v-5H1zM8 17h5V9H8z" fill="#7e7d78" />
						<text x="8" y="11" fontFamily={UI} fontSize="11" fontWeight="700" fill="#d6d5d1">?</text>
					</Glyph>
				</TrayItem>
				<TrayItem $m={9}>
					<Glyph width={16} height={16} viewBox="0 0 16 16">
						<path d="M1 5.500h3L8 2v12L4 10.500H1z" fill="#d6d5d1" />
						<path d="M10 4.500c1.500 2 1.500 5 0 7M12.500 3c2.300 3 2.300 7 0 10" fill="none" stroke="#d6d5d1" strokeWidth="1.4" />
					</Glyph>
				</TrayItem>
				<TrayItem $m={14}>
					<Glyph width={16} height={18} viewBox="0 0 16 18">
						<path d="M8 1v8" stroke="#d6d5d1" strokeWidth="2" />
						<path d="M4.500 4a6.500 6.500 0 1 0 7 0" fill="none" stroke="#d6d5d1" strokeWidth="1.8" />
					</Glyph>
				</TrayItem>
				<Caret $m={9} />
			</TopRight>
		</TopBar>
		<Desktop>
			<Dock>
				{dockApps.map((app, i) => (
					<DockItem key={i} $active={app.active}>
						{app.node}
						{app.dots?.map((top) => (
							<RunDot key={top} $top={top - 2} />
						))}
					</DockItem>
				))}
				<AppsGrid>
					{Array.from({ length: 9 }, (_, i) => (
						<i key={i} />
					))}
				</AppsGrid>
			</Dock>
			<Window>
				<TitleBar>
					未命名 1 - LibreOffice Calc
					<WinButtons>
						<WinButton>
							<Glyph width={10} height={10} viewBox="0 0 10 10">
								<path d="M1 5h8" stroke="#3d3b37" strokeWidth="1.4" />
							</Glyph>
						</WinButton>
						<WinButton>
							<Glyph width={10} height={10} viewBox="0 0 10 10">
								<rect x="1.500" y="2" width="7" height="6" fill="none" stroke="#3d3b37" strokeWidth="1.2" />
							</Glyph>
						</WinButton>
						<WinButton $close>
							<Glyph width={10} height={10} viewBox="0 0 10 10">
								<path d="M2 2l6 6M8 2L2 8" stroke="#5a1c08" strokeWidth="1.3" />
							</Glyph>
						</WinButton>
					</WinButtons>
				</TitleBar>
				<MenuBar>
					{menus.map((m) => (
						<span key={m}>{m}</span>
					))}
					<MenuClose>×</MenuClose>
				</MenuBar>
				<Toolbar $h={40}>
					<Grip />
					<ToolRun items={toolbarOne} />
				</Toolbar>
				<Toolbar $h={42}>
					<Grip />
					<Combo $w={142} $btn={27} $m={3}>
						<span>Noto Sans CJK</span>
						<b />
					</Combo>
					<Combo $w={73} $btn={27} $m={10}>
						<span>10</span>
						<b />
					</Combo>
					<ToolRun items={toolbarTwo} />
				</Toolbar>
				<Middle>
					<Workspace>
						<FormulaBar>
							<Combo $w={153} $btn={26}>
								<span>C11</span>
								<b />
							</Combo>
							<FormulaSep />
							<FxBtn>
								<Fx s={20} />
							</FxBtn>
							<FxBtn>
								<Glyph width={18} height={18} viewBox="0 0 18 18">
									<path d="M3 3l12 12M15 3L3 15" stroke="#d9141a" strokeWidth="3.6" />
								</Glyph>
							</FxBtn>
							<FxBtn>
								<Glyph width={18} height={18} viewBox="0 0 18 18">
									<path d="M14 2v9H6" fill="none" stroke="#2b62ad" strokeWidth="3" />
									<path d="M7 6l-6 5 6 5z" fill="#2b62ad" />
								</Glyph>
							</FxBtn>
							<FormulaInput>姓名</FormulaInput>
							<FormulaDrop />
						</FormulaBar>
						<SheetRow>
							<Sheet>
								<Corner />
								{columnLetters.map((l, i) => (
									<ColHead key={i} $col={i + 2} $on={l === 'C'}>
										{l}
									</ColHead>
								))}
								{rowNumbers.map((n) => (
									<RowHead key={n} $row={n + 1} $on={n === 11}>
										{n}
									</RowHead>
								))}
								{blanks.map((s) => (
									<SheetCell key={`b${s.c},${s.r}`} s={s} />
								))}
								{specs.map((s) => (
									<SheetCell key={`${s.c},${s.r}`} s={s}>
										{s.c === 2 && s.r === 11 ? <EditCaret /> : null}
									</SheetCell>
								))}
								<OverflowCell $col={9} $row={15} $span={1} $tone="green" $lift={-1} $align="center">
									笑书神侠倚碧鸳
									<OverflowMark />
								</OverflowCell>
							</Sheet>
							<VScroll>
								<VScrollCap />
								<VScrollThumb />
							</VScroll>
						</SheetRow>
						<SheetBottom>
							<HScroll>
								<HThumb />
								<HCap />
							</HScroll>
							<TabRow>
								<TabNav>
									<TabArrow d="M2 1h1.500v10H2zM10 1v10L4 6z" />
								</TabNav>
								<TabNav>
									<TabArrow d="M9 1v10L3 6z" />
								</TabNav>
								<TabNav>
									<TabArrow d="M3 1v10l6-5z" />
								</TabNav>
								<TabNav>
									<TabArrow d="M2 1v10l6-5zM8.500 1H10v10H8.500z" />
								</TabNav>
								<TabNav $m={9}>
									<TabArrow d="M4.500 0h3v4.500H12v3H7.500V12h-3V7.500H0v-3h4.500z" />
								</TabNav>
								<SheetTab>工作表1</SheetTab>
							</TabRow>
						</SheetBottom>
					</Workspace>
					<DeckHandle>
						<DeckThumb />
					</DeckHandle>
					<Deck>
						<DeckMenu>
							<Glyph width={14} height={14} viewBox="0 0 14 14">
								<path d="M2 1h9M2 4h9M2 7h9" stroke="#333" strokeWidth="1.3" />
								<path d="M6 9h7l-3.500 4z" fill="#223" />
							</Glyph>
						</DeckMenu>
						<DeckBtn $on>
							<Glyph width={26} height={26} viewBox="0 0 26 26">
								<path d="M3 6c1-3 4-4 6-3L7 6l2 3 3-2c1 2 0 3-1 4l9 9c2 0 4 1 3 4l-3-1-2 2 1 2c-3 1-5-1-5-3l-9-9C3 11 2 9 3 6z" fill="#f6f6f5" stroke="#a9a8a5" strokeWidth="1.2" />
							</Glyph>
						</DeckBtn>
						<DeckBtn>
							<Glyph width={26} height={26} viewBox="0 0 26 26">
								<path d="M6 1h16v5h-2l-1-2h-4v17h-4V4H7L6 6z" fill="#444" />
								<path d="M1 12l21 12.500H1z" fill="#8bc34a" stroke="#3f8a1d" />
								<path d="M5 19l6 3.500H5z" fill="#eaf6df" stroke="#3f8a1d" strokeWidth=".6" />
							</Glyph>
						</DeckBtn>
						<DeckBtn>
							<Glyph width={26} height={26} viewBox="0 0 26 26">
								<path d="M13 1l-3 5h6z" fill="none" stroke="#555" />
								<rect x="2" y="6" width="22" height="16" rx="1.500" fill="#e3a33a" stroke="#a66c14" strokeWidth="1.4" />
								<rect x="5" y="9" width="16" height="10" fill="#6a7f8c" />
								<rect x="5" y="15" width="16" height="4" fill="#f3b33a" />
							</Glyph>
						</DeckBtn>
						<DeckBtn>
							<Glyph width={26} height={26} viewBox="0 0 26 26">
								<circle cx="13" cy="13" r="10.500" fill="#f2f2f0" stroke="#9a9996" strokeWidth="2.4" />
								<path d="M8 18l4-6 2 2z" fill="#3a69ad" />
								<path d="M18 8l-6 4 2 2z" fill="#d9232a" />
							</Glyph>
						</DeckBtn>
						<DeckBtn>
							<Fx s={26} />
						</DeckBtn>
					</Deck>
				</Middle>
				<StatusBar>
					<StatusCell $w={185}>工作表 1，共 1 张</StatusCell>
					<StatusCell $w={224} />
					<StatusCell $w={108}>默认</StatusCell>
					<StatusCell $w={224} $center>
						English (USA) [英语(美国)]
					</StatusCell>
					<StatusCell $w={68} />
					<StatusCell $w={29} $center>
						<Glyph width={14} height={10} viewBox="0 0 14 10">
							<rect x="1" y="1" width="9" height="8" fill="#777" />
							<path d="M12 1v8" stroke="#aaa" />
						</Glyph>
					</StatusCell>
					<StatusCell $w={29} $center>
						<Glyph width={12} height={14} viewBox="0 0 12 14">
							<path d="M1.500 1h5v12h-5z" fill="none" stroke="#999" />
							<path d="M7 4.500l3 3M10 4.500l-3 3M8.500 3.500v5M6.500 6h4" stroke="#c01818" />
						</Glyph>
					</StatusCell>
					<StatusCell $w={29} />
					<StatusCell $w={285} $center>
						平均值: ; 求和: 0
					</StatusCell>
					<StatusCell $w={143} $center>
						<Glyph width={130} height={14} viewBox="0 0 130 14">
							<path d="M4.500 7h8M121 7h9M125.500 3v8" stroke="#777" strokeWidth="1.8" />
							<path d="M19 7h97" stroke="#b5b4b1" strokeWidth="2" />
							<path d="M66.500 2v10" stroke="#888" strokeWidth="1.2" />
							<circle cx="72.500" cy="7" r="3.500" fill="#f6f6f5" stroke="#888" />
						</Glyph>
					</StatusCell>
					<StatusEnd $w={49} $center>
						150%
					</StatusEnd>
				</StatusBar>
			</Window>
		</Desktop>
	</Page>
);

export default App;
